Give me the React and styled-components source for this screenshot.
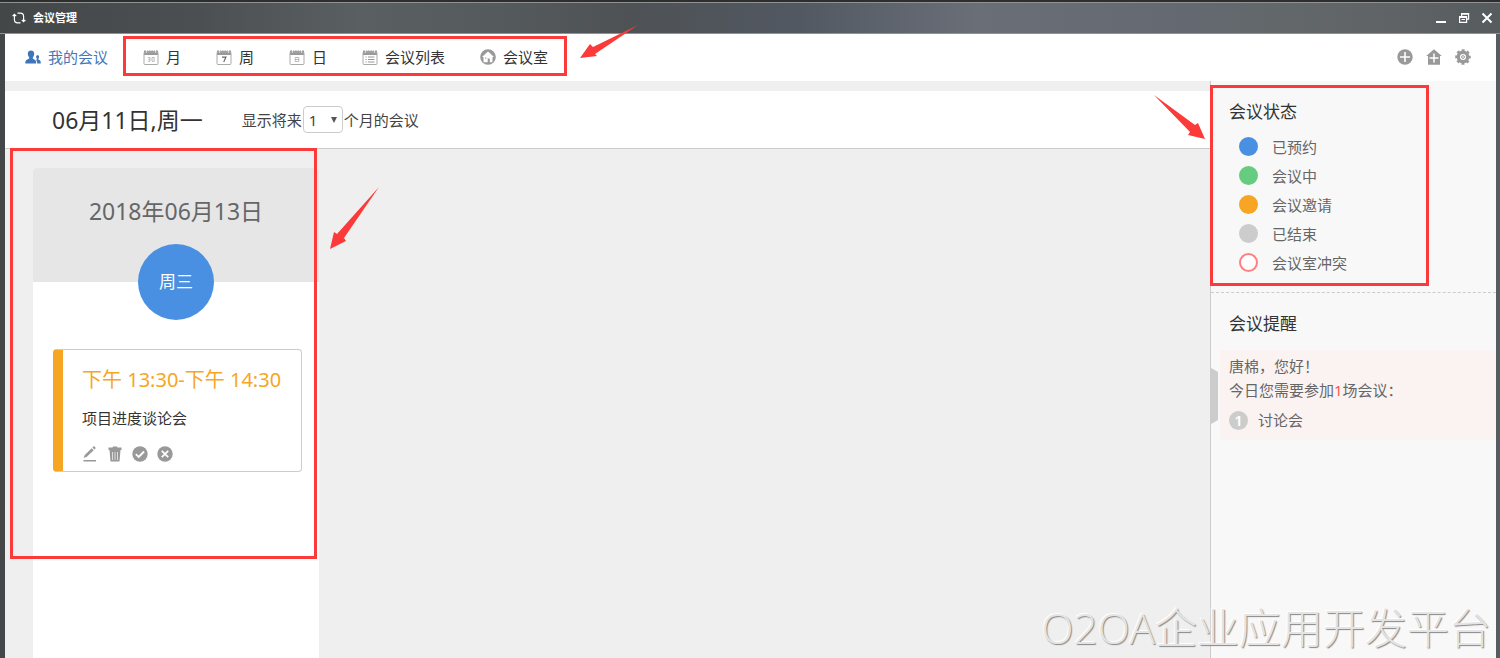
import React from "react";
import styled, { createGlobalStyle } from "styled-components";

const red = "#fc3a39";
const muted = "#999";

const GlobalStyle = createGlobalStyle`
  *, *::before, *::after { box-sizing: border-box; }
  body {
    margin: 0;
    overflow: hidden;
    color: #333;
    font-family: "Noto Sans", "Noto Sans CJK SC", sans-serif;
    font-size: 15px;
    font-weight: 400;
    line-height: 24px;
  }
  button, select { font: inherit; color: inherit; }
  h1, h2, p, ul, ol { margin: 0; padding: 0; font-weight: inherit; }
  ul, ol { list-style: none; }
`;

const Window = styled.div`
  position: relative;
  display: flex;
  flex-direction: column;
  height: 100vh;
  padding: 0 4px 0 5px;
  border-top: 2px solid #2e2e2e;
  background: linear-gradient(90deg, #444748 0%, #4b4f52 13%, #5a5f61 24%, #555a5c 33%, #4e5255 42%, #525862 53%, #696e77 65%, #646971 80%, #63686b 84%, #5f6365 93%, #565b5e 100%);
`;

const TitleBar = styled.header`
  display: flex;
  align-items: center;
  gap: 7px;
  height: 32px;
  margin: 0 -4px 0 -5px;
  padding: 0 6px 0 12px;
  border-top: 1px solid #909394;
  border-bottom: 1px solid #909394;
  color: #fff;
  flex: none;
`;

const WindowTitle = styled.h1`
  flex: 1;
  font-size: 11px;
  font-weight: 700;
`;

const WindowControls = styled.div`
  display: flex;
  gap: 9px;
`;

const IconButton = styled.button`
  display: flex;
  padding: 0;
  border: 0;
  background: none;
  color: inherit;
  cursor: pointer;
`;

const Toolbar = styled.nav`
  display: flex;
  align-items: center;
  flex: none;
  gap: 35px;
  height: 47px;
  padding: 0 25px 2px 20px;
  background: #fff;
`;

const Views = styled.div`
  position: relative;
  display: flex;
  gap: 35px;
`;

const ViewTab = styled.button`
  display: flex;
  align-items: center;
  gap: 7px;
  padding: 0;
  border: 0;
  background: none;
  color: ${(p) => (p.$active ? "#4478b8" : "#333")};
  white-space: nowrap;
  cursor: pointer;
`;

const Tools = styled.div`
  display: flex;
  gap: 13px;
  margin-left: auto;
  color: ${muted};
`;

const Content = styled.div`
  display: flex;
  flex: 1;
  min-height: 0;
`;

const Main = styled.main`
  flex: 1;
  min-width: 0;
  display: flex;
  flex-direction: column;
  padding-top: 10px;
  background: #efefef;
`;

const DateBar = styled.div`
  display: flex;
  align-items: center;
  flex: none;
  gap: 39px;
  height: 58px;
  padding-left: 47px;
  border-bottom: 1px solid #ccc;
  background: #fff;
`;

const Today = styled.h2`
  font-size: 23px;
  line-height: 32px;
`;

const RangeLabel = styled.label`
  display: flex;
  align-items: center;
  gap: 1px;
  color: #444;
`;

const SelectBox = styled.span`
  position: relative;
  display: flex;
  svg { position: absolute; right: 6px; top: 11px; pointer-events: none; }
`;

const MonthSelect = styled.select`
  appearance: none;
  width: 40px;
  height: 27px;
  padding: 0 5px;
  border: 1px solid #ccc;
  border-radius: 4px;
  background: #fff;
  line-height: 24px;
`;

const Board = styled.div`
  display: flex;
  flex: 1;
  min-height: 0;
  padding: 19px 28px 0;
`;

const Day = styled.section`
  position: relative;
  width: 286px;
  border-radius: 4px 4px 0 0;
  background: #fff;
`;

const DayHead = styled.div`
  display: flex;
  flex-direction: column;
  align-items: center;
  gap: 17px;
  height: 114px;
  padding-top: 27px;
  border-radius: 4px 4px 0 0;
  background: #e6e6e6;
  color: #666;
`;

const DayDate = styled.h2`
  font-size: 23px;
  line-height: 32px;
`;

const Weekday = styled.div`
  display: flex;
  align-items: center;
  justify-content: center;
  flex: none;
  width: 76px;
  height: 76px;
  border-radius: 50%;
  background: #4990e2;
  color: #fff;
  font-size: 17px;
`;

const MeetingCard = styled.article`
  height: 123px;
  margin: 67px 17px 0 20px;
  padding: 17px 0 0 19px;
  border: 1px solid #ccc;
  border-left: 10px solid #f6a623;
  border-radius: 4px;
`;

const MeetingTime = styled.p`
  color: #f6a623;
  font-size: 20px;
  line-height: 26px;
  white-space: nowrap;
`;

const MeetingName = styled.p`
  margin-top: 13px;
`;

const Actions = styled.div`
  display: flex;
  gap: 9px;
  margin-top: 16px;
  color: ${muted};
`;

const Sidebar = styled.aside`
  position: relative;
  flex: none;
  width: 286px;
  border-left: 1px solid #ccc;
  background: #f8f8f8;
  color: #666;
`;

const StatusPanel = styled.section`
  position: relative;
  height: 212px;
  padding: 19px 18px 0;
  border-bottom: 1px dashed #ccc;
`;

const PanelTitle = styled.h2`
  color: #333;
  font-size: 17px;
  line-height: 24px;
`;

const StatusList = styled.ul`
  margin: 8px 0 0 10px;
`;

const StatusItem = styled.li`
  display: flex;
  align-items: center;
  gap: 14px;
  height: 29px;
`;

const Dot = styled.span`
  width: 19px;
  height: 19px;
  border: 2px solid ${(p) => p.$color};
  border-radius: 50%;
  background: ${(p) => (p.$hollow ? "#fff" : p.$color)};
`;

const ReminderPanel = styled.section`
  padding-top: 19px;
  ${PanelTitle} { padding-left: 18px; }
`;

const Reminder = styled.div`
  margin: 14px 0 0 9px;
  padding: 4px 9px 8px;
  background: #faf3f2;
`;

const Count = styled.span`
  color: #ff5a4d;
`;

const ReminderItem = styled.li`
  display: flex;
  align-items: center;
  gap: 10px;
  margin-top: 6px;
`;

const Badge = styled.span`
  width: 19px;
  height: 19px;
  border-radius: 50%;
  background: #ccc;
  color: #fff;
  font-weight: 600;
  line-height: 19px;
  text-align: center;
`;

const Handle = styled.button`
  position: absolute;
  left: 0;
  top: 287px;
  width: 7px;
  height: 56px;
  padding: 0;
  border: 0;
  background: #ccc;
  clip-path: polygon(0 0, 100% 4px, 100% 52px, 0 100%);
`;

const Frame = styled.div`
  position: absolute;
  inset: ${(p) => p.$inset};
  height: ${(p) => p.$height || "auto"};
  border: 3px solid ${red};
  pointer-events: none;
`;

const Arrow = styled.svg`
  position: absolute;
  left: ${(p) => p.$left};
  top: ${(p) => p.$top};
  fill: ${red};
  pointer-events: none;
`;

const Watermark = styled.div`
  position: absolute;
  right: 9px;
  bottom: 2px;
  color: #e4e4e4;
  font-family: "Open Sans", "Noto Sans CJK SC", sans-serif;
  font-size: 42px;
  font-weight: 300;
  line-height: 56px;
  text-shadow: 1px 1px 1px #888, -1px -1px 1px #fff;
  white-space: nowrap;
  pointer-events: none;
`;

const Calendar = ({ children }) => (
  <svg width="16" height="16" viewBox="0 0 16 16" fill="none" aria-hidden="true">
    <path d="M1 1.500h14V6H1z" fill="#999" />
    <path d="M3.500 1v3M12.500 1v3" stroke="#fff" />
    <path d="M5.500 1v1M8 1v1M10.500 1v1" stroke="#fff" strokeWidth=".8" />
    <rect x="1" y="3" width="14" height="12.500" rx="1" stroke="#aaa" />
    {children}
  </svg>
);

const MonthIcon = () => (
  <Calendar><path d="M4.800 8.500h2.200v3.800H4.800M5.200 10.400H7M9 8.500h2.200v3.800H9z" stroke="#aaa" strokeWidth=".8" /></Calendar>
);
const WeekIcon = () => (
  <Calendar><path d="M6 8.100h4L7.700 13.100" stroke="#666" strokeWidth="1.100" /></Calendar>
);
const DayIcon = () => (
  <Calendar><path d="M6.200 8.500h3.600v4H6.200zM6.200 10.500h3.600" stroke="#aaa" strokeWidth=".8" /></Calendar>
);
const ListIcon = () => (
  <Calendar><path d="M3.500 8h1.200M6 8h6.500M3.500 10.500h1.200M6 10.500h6.500M3.500 13h1.200M6 13h6.500" stroke="#999" /></Calendar>
);
const RoomIcon = () => (
  <svg width="16" height="16" viewBox="0 0 16 16" aria-hidden="true">
    <circle cx="8" cy="8" r="7.800" fill="#999" />
    <path d="M8 2.400 14 8h-1.500v4.300c0 .6-.4 1-1 1H9.800V9.600H7.700v3.700H4.500c-.6 0-1-.4-1-1V8H2z" fill="#fff" />
    <path d="M5.200 8.600h1.200v1.200H5.200z" fill="#999" />
  </svg>
);
const PeopleIcon = () => (
  <svg width="16" height="16" viewBox="0 0 16 16" fill="#3d76bb" aria-hidden="true">
    <path d="M6 1.500c2.200 0 3.300 1.500 3.200 3.500-.1 1.600-.7 2.700-1.400 3.400v1.200l2.300 1.300c.8.500 1.100 1.300 1.100 3.600H.3c0-2.300.3-3.100 1.100-3.600l2.800-1.300V8.400C3.500 7.700 2.900 6.600 2.800 5 2.700 3 3.800 1.500 6 1.500z" />
    <path d="M12.600 6.200c1 0 1.600.7 1.500 1.700-.1.800-.3 1.300-.7 1.700v.8l1.400.8c.7.400 1 1.300 1 3.300h-3.600c0-2-.4-3-1.300-3.600l.9-.5v-.8c-.4-.4-.6-.9-.7-1.700-.1-1 .5-1.700 1.500-1.700z" />
  </svg>
);
const RefreshIcon = () => (
  <svg width="14" height="14" viewBox="0 0 14 14" fill="none" stroke="#fff" strokeWidth="1.200" aria-hidden="true">
    <path d="M5.500 2.100h2.800c2 0 3.300 1.300 3.300 3.300v5.200M8.500 11.900H5.700c-2 0-3.300-1.300-3.300-3.300V3.400M.6 5.200l1.800-1.900 1.800 1.900M9.800 8.800l1.800 1.900 1.800-1.900" />
  </svg>
);
const MinimizeIcon = () => (
  <svg width="14" height="14" viewBox="0 0 14 14" stroke="#fff" strokeWidth="2"><path d="M2 11h10" /></svg>
);
const RestoreIcon = () => (
  <svg width="14" height="14" viewBox="0 0 14 14" fill="none" stroke="#fff" strokeWidth="1.200">
    <path d="M4.600 5V2.600h7v5.600H9.500M2.600 5.600h7v5.800h-7zM2.600 6.400h7M4.600 3.200h7M4.500 8.500h3.500" />
  </svg>
);
const CloseIcon = () => (
  <svg width="14" height="14" viewBox="0 0 14 14" stroke="#fff" strokeWidth="2"><path d="m2.500 2.500 9 9M11.500 2.500l-9 9" /></svg>
);
const PlusIcon = () => (
  <svg width="16" height="16" viewBox="0 0 16 16">
    <circle cx="8" cy="8" r="7.700" fill="#999" />
    <path d="M8 3v10M3 8h10" stroke="#fff" strokeWidth="1.600" />
  </svg>
);
const HomePlusIcon = () => (
  <svg width="16" height="16" viewBox="0 0 16 16">
    <path d="M8 .3 15.800 7H14v8.700H2V7H.2z" fill="#999" />
    <path d="M8 4.500v9M3.500 9h9" stroke="#fff" strokeWidth="1.500" />
  </svg>
);
const GearIcon = () => (
  <svg width="16" height="16" viewBox="0 0 16 16" fill="none" stroke="#999">
    <circle cx="8" cy="8" r="4.700" strokeWidth="3.400" />
    <circle cx="8" cy="8" r="6.800" strokeWidth="2" strokeDasharray="2.900 2.440" strokeDashoffset="1.450" />
    <circle cx="8" cy="8" r="1.400" strokeWidth="1" />
  </svg>
);
const EditIcon = () => (
  <svg width="16" height="16" viewBox="0 0 16 16" fill="#999">
    <path d="M1.500 12 2.800 8.900 9.700 2.200l2 2L4.800 10.800zM10.400 1.500l.8-.8c.5-.5 1-.5 1.500 0l.6.600c.5.500.5 1 0 1.500l-.9.700zM1.500 14h12.500v1.500H1.500z" />
  </svg>
);
const TrashIcon = () => (
  <svg width="16" height="16" viewBox="0 0 16 16" fill="none">
    <path d="M1.500 1.500h4l.5-1h4l.5 1h4V4h-13zM2.500 4h11l-1 11.500h-9z" fill="#999" />
    <path d="M5.500 6v8M8 6v8M10.500 6v8" stroke="#ddd" />
  </svg>
);
const AcceptIcon = () => (
  <svg width="16" height="16" viewBox="0 0 16 16" fill="none">
    <circle cx="8" cy="8" r="7.700" fill="#999" />
    <path d="m3.800 8.200 2.900 2.800 5.400-5.500" stroke="#fff" strokeWidth="1.800" />
  </svg>
);
const RejectIcon = () => (
  <svg width="16" height="16" viewBox="0 0 16 16">
    <circle cx="8" cy="8" r="7.700" fill="#999" />
    <path d="m4.800 4.800 6.400 6.400M11.200 4.800l-6.400 6.400" stroke="#fff" strokeWidth="1.800" />
  </svg>
);

const views = [
  ["月", MonthIcon],
  ["周", WeekIcon],
  ["日", DayIcon],
  ["会议列表", ListIcon],
  ["会议室", RoomIcon],
];

const windowControls = [
  ["最小化", MinimizeIcon],
  ["还原", RestoreIcon],
  ["关闭", CloseIcon],
];

const tools = [
  ["新建会议", PlusIcon],
  ["新建会议室", HomePlusIcon],
  ["设置", GearIcon],
];

const actions = [
  ["编辑", EditIcon],
  ["删除", TrashIcon],
  ["接受", AcceptIcon],
  ["拒绝", RejectIcon],
];

const statuses = [
  { label: "已预约", color: "#4990e2" },
  { label: "会议中", color: "#66cc7f" },
  { label: "会议邀请", color: "#f6a623" },
  { label: "已结束", color: "#ccc" },
  { label: "会议室冲突", color: "#ff8080", hollow: true },
];

const IconButtons = ({ items }) =>
  items.map(([label, Icon]) => (
    <IconButton key={label} type="button" aria-label={label}><Icon /></IconButton>
  ));

export default function App() {
  return (
    <Window>
      <GlobalStyle />
      <TitleBar>
        <RefreshIcon />
        <WindowTitle>会议管理</WindowTitle>
        <WindowControls><IconButtons items={windowControls} /></WindowControls>
      </TitleBar>

      <Toolbar>
        <ViewTab type="button" $active><PeopleIcon />我的会议</ViewTab>
        <Views>
          {views.map(([label, Icon]) => (
            <ViewTab key={label} type="button"><Icon />{label}</ViewTab>
          ))}
          <Frame $inset="-9px -19px -7px -20px" />
          <Arrow $left="437px" $top="-20px" width="58" height="34" viewBox="0 0 58 34">
            <path d="M0 33 10 19 13 22 58 0 15 29 17 31z" />
          </Arrow>
        </Views>
        <Tools><IconButtons items={tools} /></Tools>
      </Toolbar>

      <Content>
        <Main>
          <DateBar>
            <Today>06月11日,周一</Today>
            <RangeLabel>
              显示将来
              <SelectBox>
                <MonthSelect defaultValue="1">
                  <option>1</option>
                  <option>2</option>
                  <option>3</option>
                </MonthSelect>
                <svg width="6" height="6" viewBox="0 0 6 6" fill="#555"><path d="M0 0h6L3 6z" /></svg>
              </SelectBox>
              个月的会议
            </RangeLabel>
          </DateBar>
          <Board>
            <Day>
              <DayHead>
                <DayDate>2018年06月13日</DayDate>
                <Weekday>周三</Weekday>
              </DayHead>
              <MeetingCard>
                <MeetingTime>下午 13:30-下午 14:30</MeetingTime>
                <MeetingName>项目进度谈论会</MeetingName>
                <Actions><IconButtons items={actions} /></Actions>
              </MeetingCard>
              <Frame $inset="-20px 2px auto -23px" $height="411px" />
              <Arrow $left="297px" $top="19px" width="50" height="63" viewBox="0 0 50 63">
                <path d="M0 62 4 45 7 47 49 0 14 51 16 54z" />
              </Arrow>
            </Day>
          </Board>
        </Main>

        <Sidebar>
          <StatusPanel>
            <PanelTitle>会议状态</PanelTitle>
            <StatusList>
              {statuses.map((s) => (
                <StatusItem key={s.label}>
                  <Dot $color={s.color} $hollow={s.hollow} />
                  {s.label}
                </StatusItem>
              ))}
            </StatusList>
            <Frame $inset="4px 67px 6px -1px" />
            <Arrow $left="-57px" $top="14px" width="51" height="45" viewBox="0 0 51 45">
              <path d="M0 0 41 30 44 28 51 44 34 40 36 37z" />
            </Arrow>
          </StatusPanel>
          <ReminderPanel>
            <PanelTitle>会议提醒</PanelTitle>
            <Reminder>
              <p>唐棉，您好！</p>
              <p>今日您需要参加<Count>1</Count>场会议：</p>
              <ol>
                <ReminderItem><Badge>1</Badge>讨论会</ReminderItem>
              </ol>
            </Reminder>
          </ReminderPanel>
          <Handle type="button" aria-label="收起侧栏" />
        </Sidebar>
      </Content>
      <Watermark>O2OA企业应用开发平台</Watermark>
    </Window>
  );
}
